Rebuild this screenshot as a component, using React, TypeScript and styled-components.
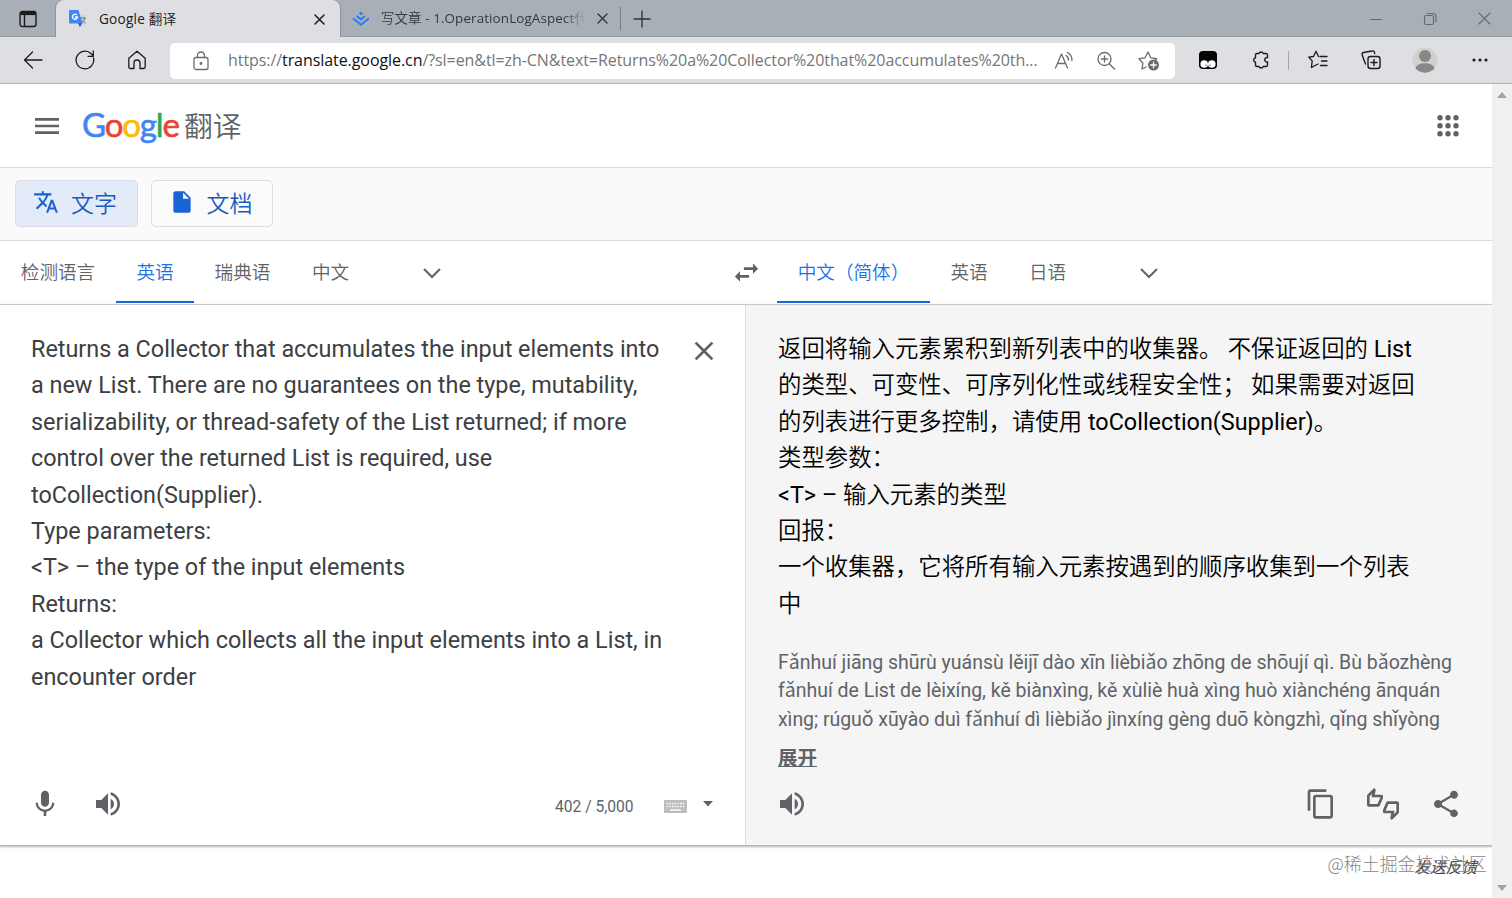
import React from "react";
import styled, { createGlobalStyle } from "styled-components";
import {
  MdClose, MdContentCopy, MdInsertDriveFile, MdMenu, MdMic,
  MdOutlineThumbsUpDown, MdShare, MdSwapHoriz, MdTranslate, MdVolumeUp,
} from "react-icons/md";

const ui = `"Open Sans", "Noto Sans CJK SC", sans-serif`;
const roboto = `Roboto, "Noto Sans CJK SC", sans-serif`;

const Global = createGlobalStyle`
  * { box-sizing: border-box; }
  html, body { margin: 0; padding: 0; overflow: hidden; background: #fff; }
`;

const Window = styled.div`
  width: 1512px; height: 898px; display: flex; flex-direction: column;
  overflow: hidden; font-family: ${roboto}; color: #5f6368; background: #fff;
`;
const TitleBar = styled.div`
  height: 37px; flex: none; display: flex; background: #a9afb7;
  box-shadow: inset 0 -1px 0 #989ca2; font-family: ${ui};
`;
const Slot = styled.div<{ $w: number; $c?: string }>`
  width: ${(p) => p.$w}px; flex: none; display: flex; align-items: center;
  justify-content: center; color: ${(p) => p.$c ?? "#1b1b1b"};
  svg { display: block; flex: none; }
`;
const ActiveTab = styled.div`
  width: 284px; margin-bottom: -1px; flex: none; display: flex; align-items: center; background: #dddfe3;
  border-radius: 8px 8px 0 0; font-size: 13.6px; color: #202020;
  box-shadow: -1px 0 1px #8d9197, 1px 0 1px #8d9197;
`;
const IdleTab = styled(ActiveTab)`
  width: 280px; margin: 0; background: none; box-shadow: none; color: #34383c; font-size: 13.4px;
`;
const TabTitle = styled.span<{ $fade?: boolean; $ls: number }>`
  flex: 1; min-width: 0; overflow: hidden; white-space: nowrap; line-height: 20px; margin-top: -1px;
  letter-spacing: ${(p) => p.$ls}px;
  ${(p) => p.$fade && "-webkit-mask-image: linear-gradient(90deg, #000 90%, transparent);"}
`;
const Divider = styled.div<{ $h: number; $c: string }>`
  width: 1px; height: ${(p) => p.$h}px; align-self: center; flex: none; background: ${(p) => p.$c};
`;
const Spacer = styled.div` flex: 1; `;
const Toolbar = styled.div`
  height: 47px; flex: none; display: flex; align-items: stretch; padding-left: 7px;
  background: #dddfe3; border-bottom: 1px solid #aeb0b2; position: relative;
`;
const Address = styled.div`
  width: 1005px; height: 36px; margin: 6px 7px 0; flex: none; display: flex; padding: 0 4px 0 10px;
  border-radius: 5px; background: #fff; font: 16px/35px ${ui}; color: #767676;
`;
const Url = styled.div`
  width: 815px; margin-left: 6px; flex: none; white-space: nowrap; letter-spacing: -0.07px;
  b { font-weight: 400; color: #111; }
`;
const Viewport = styled.div` flex: 1; min-height: 0; display: flex; `;
const Page = styled.div` width: 1492px; flex: none; display: flex; flex-direction: column; `;
const Scrollbar = styled.div`
  width: 20px; display: flex; flex-direction: column; justify-content: space-between;
  align-items: center; padding: 8px 0 7px; background: #f0f0f0;
`;
const Header = styled.header`
  height: 84px; flex: none; display: flex; align-items: center; padding: 0 28px 0 31px;
  border-bottom: 1px solid #dcdcdc;
  & > svg { flex: none; }
`;
const Logo = styled.div`
  display: flex; align-items: baseline; margin: -2px 0 0 19px; white-space: nowrap;
  font: 28.8px/40px "Noto Sans CJK SC", sans-serif; font-weight: 350; color: #5f6368;
`;
const Wordmark = styled.span`
  width: 102px; font: 400 33px/40px Lato, sans-serif; letter-spacing: -1.15px;
  -webkit-text-stroke: 0.6px currentColor;
`;
const Letter = styled.span<{ $c: string }>`
  color: ${(p) => p.$c}; -webkit-text-stroke-color: ${(p) => p.$c};
`;
const Modes = styled.div`
  height: 73px; flex: none; display: flex; gap: 13px; padding: 12px 15px;
  background: #fafafa; border-bottom: 1px solid #dadce0;
`;
const ModeButton = styled.button<{ $on?: boolean }>`
  width: 122.500px; height: 47px; display: flex; align-items: center; gap: 12px; padding: 0 0 0 17px;
  border: 1px solid #dadce6; border-radius: 5px; background: ${(p) => (p.$on ? "#e4ebf8" : "#fbfbfc")};
  color: #185abc; font: 350 23px/42px "Noto Sans CJK SC", sans-serif; white-space: nowrap;
  svg { color: #1a63d2; margin-top: -3px; flex: none; }
`;
const ModeLabel = styled.span` padding-bottom: 3px; `;
const Languages = styled.div`
  height: 64px; flex: none; display: flex; border-bottom: 1px solid #dadce0;
`;
const Lang = styled.div<{ $w: number; $on?: boolean }>`
  width: ${(p) => p.$w}px; height: 62px; flex: none; text-align: center; white-space: nowrap;
  font: 350 18.6px/59px "Noto Sans CJK SC", sans-serif;
  color: ${(p) => (p.$on ? "#1a73e8" : "#5f6368")};
  border-bottom: 2px solid ${(p) => (p.$on ? "#1967d2" : "transparent")};
`;
const Side = styled.div<{ $w: number; $pl?: number }>`
  width: ${(p) => p.$w}px; flex: none; display: flex; padding-left: ${(p) => p.$pl ?? 0}px;
`;
const Panels = styled.div`
  height: 540px; flex: none; display: flex; box-shadow: 0 1px 2px 1px rgba(0, 0, 0, 0.3);
`;
const Source = styled.section`
  width: 746px; flex: none; display: flex; flex-direction: column; border-right: 1px solid #dadce0; background: #fff;
`;
const Target = styled.section`
  flex: 1; display: flex; flex-direction: column; padding-left: 32px; background: #f5f5f5;
`;
const SourceBody = styled.div`
  height: 468px; display: flex; padding: 26px 25px 0 31px; justify-content: space-between;
  svg { margin-top: 4px; }
`;
const Lines = styled.div`
  font-size: 23.4px; line-height: 36.4px; color: #3c4043; white-space: nowrap;
`;
const Line = styled.div<{ $ls?: number }>` letter-spacing: ${(p) => p.$ls ?? 0}px; `;
const Translated = styled(Lines)`
  height: 291px; margin-top: 26px; color: #000;
`;
const Cjk = styled.span`
  font-family: "Noto Sans CJK SC", sans-serif; font-weight: 350; line-height: 1;
`;
const Pinyin = styled.div`
  margin-top: 27px; font-size: 19.5px; line-height: 28.4px; height: 85px; white-space: nowrap; color: #5f6368;
`;
const Expand = styled.div`
  height: 39px; padding-top: 11px; line-height: 28px; font-size: 19.5px; font-weight: 700; text-decoration: underline;
`;
const Actions = styled.div<{ $pl: number }>`
  height: 61px; display: flex; align-items: center; padding-left: ${(p) => p.$pl}px; color: #5f6368;
  svg { flex: none; }
`;
const Count = styled.span` width: 109px; font-size: 15.6px; line-height: 24px; padding-top: 6px; `;
const KeyboardIcon = styled.svg` margin-top: 5px; `;
const Footer = styled.footer`
  flex: 1; display: flex; justify-content: flex-end; position: relative;
  font-family: "Noto Sans CJK SC", sans-serif; white-space: nowrap;
`;
const Feedback = styled.span`
  margin: 10px 15px 0 0; font-size: 15.7px; line-height: 24px; font-style: italic; color: #3c4043; font-weight: 400;
`;
const Watermark = styled.span`
  position: absolute; right: 5px; top: 5px; font-size: 17.9px; line-height: 26px; font-weight: 300; color: #858585;
`;

type IconProps = { w: number; h?: number; sw?: number; children: React.ReactNode };
const Icon = ({ w, h = w, sw = 1.3, children }: IconProps) => (
  <svg width={w} height={h} viewBox={`0 0 ${w} ${h}`} fill="none" stroke="currentColor"
    strokeWidth={sw} strokeLinecap="round" strokeLinejoin="round">{children}</svg>
);
const Cross = ({ s, sw = 1.3 }: { s: number; sw?: number }) => (
  <Icon w={s + 2} sw={sw}><path d={`M1 1L${s + 1} ${s + 1}M${s + 1} 1L1 ${s + 1}`} /></Icon>
);
const Chevron = () => <Icon w={20} h={14} sw={2}><path d="M2 3l8 8 8-8" strokeLinecap="butt" strokeLinejoin="miter" /></Icon>;

const sourceLines = [
  "Returns a Collector that accumulates the input elements into",
  "a new List. There are no guarantees on the type, mutability,",
  "serializability, or thread-safety of the List returned; if more",
  "control over the returned List is required, use",
  "toCollection(Supplier).",
  "Type parameters:",
  "<T> – the type of the input elements",
  "Returns:",
  "a Collector which collects all the input elements into a List, in",
  "encounter order",
];

export default function App() {
  return (
    <Window>
      <Global />
      <TitleBar>
        <Slot $w={56}>
          <Icon w={18} sw={1.4}><rect x="1" y="1.500" width="16" height="15" rx="2.500" /><path d="M1.500 3.500h15" strokeWidth="3.200" strokeLinecap="butt" /><path d="M5.500 5v11" /></Icon>
        </Slot>
        <ActiveTab>
          <Slot $w={43}>
            <svg width="18" height="18" viewBox="0 0 18 18">
              <path d="M8 5h8a1 1 0 0 1 1 1v9a1 1 0 0 1-1 1h-5z" fill="#d3d6da" />
              <path d="M11 8h6M14 7v1M16 8c-.6 2.500-2 4-4 5M12.500 9.500c1 2 2.500 3 4 3.500" stroke="#70777f" fill="none" />
              <path d="M9 13h4l-2 4z" fill="#3b3fa8" />
              <path d="M1 0h8.500l4 13.500H1a1 1 0 0 1-1-1V1a1 1 0 0 1 1-1z" fill="#4286f5" />
              <path d="M7.800 5A2.500 2.500 0 1 0 8.500 7H6" stroke="#fff" strokeWidth="1.300" fill="none" />
            </svg>
          </Slot>
          <TabTitle $ls={0.22}>Google <Cjk>翻译</Cjk></TabTitle>
          <Slot $w={41}><Cross s={9} sw={1.5} /></Slot>
        </ActiveTab>
        <IdleTab>
          <Slot $w={41} $c="#2a7df0">
            <Icon w={18} h={16} sw={2}><path d="M1 7.200L9 13.700l8-6.500M4.800 5L9 8.400 13.200 5" strokeLinecap="butt" strokeLinejoin="miter" /><path d="M9 .8l2.200 1.700L9 4.200 6.800 2.500z" fill="currentColor" stroke="none" /></Icon>
          </Slot>
          <TabTitle $fade $ls={0.12}><Cjk>写文章</Cjk> - 1.OperationLogAspect<Cjk>代</Cjk></TabTitle>
          <Slot $w={35} $c="#303030"><Cross s={9} /></Slot>
        </IdleTab>
        <Divider $h={23} $c="#777b80" />
        <Slot $w={42} $c="#303030"><Icon w={18}><path d="M1 9h16M9 1v16" /></Icon></Slot>
        <Spacer />
        <Slot $w={54} $c="#666a6e"><Icon w={12} sw={1}><path d="M0 6.500h12" /></Icon></Slot>
        <Slot $w={54} $c="#666a6e"><Icon w={14} sw={1.1}><rect x="1.500" y="3.500" width="9" height="9" rx="1.500" /><path d="M4 1.500h6a3 3 0 0 1 3 3V10" /></Icon></Slot>
        <Slot $w={55} $c="#666a6e"><Cross s={11} sw={1.1} /></Slot>
      </TitleBar>
      <Toolbar>
        <Slot $w={52}><Icon w={20}><path d="M19 10H1.500M9.500 2L1.500 10l8 8" /></Icon></Slot>
        <Slot $w={52}><Icon w={20}><path d="M18.500 8a8.800 8.800 0 1 1-2.300-4.200L18 5.800M18.300 1v5.300H13" /></Icon></Slot>
        <Slot $w={52}><Icon w={20}><path d="M1.800 8.200L10 1.200l8.200 7V17a1.500 1.500 0 0 1-1.500 1.500H13V13a3 3 0 0 0-6 0v5.500H3.300A1.500 1.500 0 0 1 1.800 17z" /></Icon></Slot>
        <Address>
          <Slot $w={42} $c="#6b6b6b"><Icon w={18} h={20}><rect x="2" y="6.500" width="14" height="12" rx="2" /><path d="M5.500 6.500V4.500a3.500 3.500 0 0 1 7 0v2" /><circle cx="9" cy="12.500" r=".8" fill="currentColor" /></Icon></Slot>
          <Url>https://<b>translate.google.cn</b>/?sl=en&amp;tl=zh-CN&amp;text=Returns%20a%20Collector%20that%20accumulates%20th...</Url>
          <Slot $w={42} $c="#6b6b6b"><Icon w={20}><path d="M1.500 17L7.500 3l6 14M3.500 12.500h8M12 4.500a5 5 0 0 1 2.500 4.500M13.500 1.500a9 9 0 0 1 4.500 8" /></Icon></Slot>
          <Slot $w={42} $c="#6b6b6b"><Icon w={20}><circle cx="8.500" cy="8" r="6.500" /><path d="M13.500 13l5 5M8.500 5v6M5.500 8h6" /></Icon></Slot>
          <Slot $w={44} $c="#6b6b6b"><Icon w={22}><path d="M8 17l-4 2 .9-6L1 8.700l6-.9L10 2l2.800 5.800 6 .9-1.500 1.500" /><circle cx="15.500" cy="15" r="5.500" fill="currentColor" stroke="none" /><path d="M12.700 15h5.600M15.500 12.200v5.600" stroke="#fff" /></Icon></Slot>
        </Address>
        <Slot $w={52}>
          <svg width="18" height="18"><rect width="18" height="18" rx="4" fill="#050505" /><circle cx="5.200" cy="13" r="3.800" fill="#fff" /><circle cx="12.800" cy="13" r="3.800" fill="#fff" /><circle cx="7" cy="14" r=".6" fill="#111" /><circle cx="11" cy="14" r=".6" fill="#111" /></svg>
        </Slot>
        <Slot $w={54}><Icon w={20} sw={1.4}><path d="M6 3.500h2a2.200 2.200 0 0 1 4.200 0H15a1.500 1.500 0 0 1 1.500 1.500V7.500a2.300 2.300 0 1 0 0 4.500v3a1.500 1.500 0 0 1-1.500 1.500h-2.800a2.200 2.200 0 0 1-4.200 0H6A1.500 1.500 0 0 1 4.500 15v-2.700a2.300 2.300 0 0 1 0-4.500V5A1.500 1.500 0 0 1 6 3.500z" /></Icon></Slot>
        <Divider $h={19} $c="#a4a6a9" />
        <Slot $w={58}><Icon w={20}><path d="M12 6.500h7M13.500 11H19M12.500 15.500H19M10.500 6.500L8 1.200 5.500 6.500.8 7.200l3.400 3.700-.8 6.600L8 15l2-1" /></Icon></Slot>
        <Slot $w={48}><Icon w={20} sw={1.4}><rect x="7" y="6.500" width="12" height="12" rx="2.500" /><path d="M13 9.500v6M10 12.500h6M4.500 14L1.200 5a2 2 0 0 1 1.300-2.500L11 1a2 2 0 0 1 2.500 1.500l.3 1" /></Icon></Slot>
        <Slot $w={59}>
          <svg width="26" height="26"><circle cx="13" cy="13" r="12.500" fill="#d2d0ce" /><circle cx="13" cy="9" r="6" fill="#8a8886" /><path d="M3.500 21.500c1-7 18-7 19 0A13 13 0 0 1 3.500 21.500z" fill="#8a8886" /></svg>
        </Slot>
        <Slot $w={51}><svg width="18" height="4"><g fill="#1b1b1b"><circle cx="3" cy="2" r="1.600" /><circle cx="9" cy="2" r="1.600" /><circle cx="15" cy="2" r="1.600" /></g></svg></Slot>
      </Toolbar>
      <Viewport>
        <Page>
          <Header>
            <MdMenu size={32} />
            <Logo>
              <Wordmark>
                <Letter $c="#4285f4">G</Letter><Letter $c="#ea4335">o</Letter><Letter $c="#fbbc05">o</Letter><Letter $c="#4285f4">g</Letter><Letter $c="#34a853">l</Letter><Letter $c="#ea4335">e</Letter>
              </Wordmark>翻译
            </Logo>
            <Spacer />
            <svg width="32" height="32" fill="#5f6368">
              {[8, 16, 24].map((y) => [8, 16, 24].map((x) => <circle key={`${x}-${y}`} cx={x} cy={y - 0.3} r="2.700" />))}
            </svg>
          </Header>
          <Modes>
            <ModeButton $on><MdTranslate size={26} /><ModeLabel>文字</ModeLabel></ModeButton>
            <ModeButton><MdInsertDriveFile size={26} /><ModeLabel>文档</ModeLabel></ModeButton>
          </Modes>
          <Languages>
            <Side $w={726}>
              <Lang $w={116}>检测语言</Lang>
              <Lang $w={78} $on>英语</Lang>
              <Lang $w={97}>瑞典语</Lang>
              <Lang $w={79}>中文</Lang>
              <Slot $w={124} $c="#5f6368"><Chevron /></Slot>
            </Side>
            <Slot $w={40} $c="#5f6368"><MdSwapHoriz size={31} /></Slot>
            <Side $w={726} $pl={11}>
              <Lang $w={153} $on>中文（简体）</Lang>
              <Lang $w={78}>英语</Lang>
              <Lang $w={79}>日语</Lang>
              <Slot $w={124} $c="#5f6368"><Chevron /></Slot>
            </Side>
          </Languages>
          <Panels>
            <Source>
              <SourceBody>
                <Lines>{sourceLines.map((t) => <Line key={t}>{t}</Line>)}</Lines>
                <MdClose size={32} />
              </SourceBody>
              <Actions $pl={29}>
                <MdMic size={32} />
                <Slot $w={94} $c="#5f6368"><MdVolumeUp size={32} /></Slot>
                <Spacer />
                <Count>402 / 5,000</Count>
                <KeyboardIcon width="23" height="13" viewBox="0 0 23 13">
                  <rect width="23" height="13" rx="1" fill="#bdbdbd" />
                  <path d="M2.500 3.500h18M2.500 6.500h18" stroke="#fff" strokeWidth="1.500" strokeDasharray="1.500 1.200" /><path d="M6 10h11" stroke="#fff" strokeWidth="1.500" />
                </KeyboardIcon>
                <Slot $w={42} $c="#5f6368"><svg width="10" height="6"><path d="M0 0h10L5 5.500z" fill="#5f6368" /></svg></Slot>
                <Slot $w={16} />
              </Actions>
            </Source>
            <Target>
              <Translated>
                <Line><Cjk>返回将输入元素累积到新列表中的收集器。 不保证返回的</Cjk> List</Line>
                <Line><Cjk>的类型、可变性、可序列化性或线程安全性； 如果需要对返回</Cjk></Line>
                <Line><Cjk>的列表进行更多控制，请使用</Cjk> toCollection(Supplier)<Cjk>。</Cjk></Line>
                <Line><Cjk>类型参数：</Cjk></Line>
                <Line>&lt;T&gt; – <Cjk>输入元素的类型</Cjk></Line>
                <Line><Cjk>回报：</Cjk></Line>
                <Line><Cjk>一个收集器，它将所有输入元素按遇到的顺序收集到一个列表</Cjk></Line>
                <Line><Cjk>中</Cjk></Line>
              </Translated>
              <Pinyin>
                <Line $ls={-0.02}>Fǎnhuí jiāng shūrù yuánsù lěijī dào xīn lièbiǎo zhōng de shōují qì. Bù bǎozhèng</Line>
                <Line $ls={-0.02}>fǎnhuí de List de lèixíng, kě biànxìng, kě xùliè huà xìng huò xiànchéng ānquán</Line>
                <Line $ls={-0.05}>xìng; rúguǒ xūyào duì fǎnhuí dì lièbiǎo jìnxíng gèng duō kòngzhì, qǐng shǐyòng</Line>
              </Pinyin>
              <Expand>展开</Expand>
              <Actions $pl={0}>
                <Slot $w={28} $c="#5f6368"><MdVolumeUp size={32} /></Slot>
                <Spacer />
                <Slot $w={62} $c="#5f6368"><MdContentCopy size={32} /></Slot>
                <Slot $w={62} $c="#5f6368"><MdOutlineThumbsUpDown size={32} /></Slot>
                <Slot $w={63} $c="#5f6368"><MdShare size={32} /></Slot>
                <Slot $w={15} />
              </Actions>
            </Target>
          </Panels>
          <Footer>
            <Watermark>@稀土掘金技术社区</Watermark>
            <Feedback>发送反馈</Feedback>
          </Footer>
        </Page>
        <Scrollbar>
          <svg width="10" height="6"><path d="M0 6h10L5 0z" fill="#a3a3a3" /></svg>
          <svg width="10" height="6"><path d="M0 0h10L5 6z" fill="#a3a3a3" /></svg>
        </Scrollbar>
      </Viewport>
    </Window>
  );
}
